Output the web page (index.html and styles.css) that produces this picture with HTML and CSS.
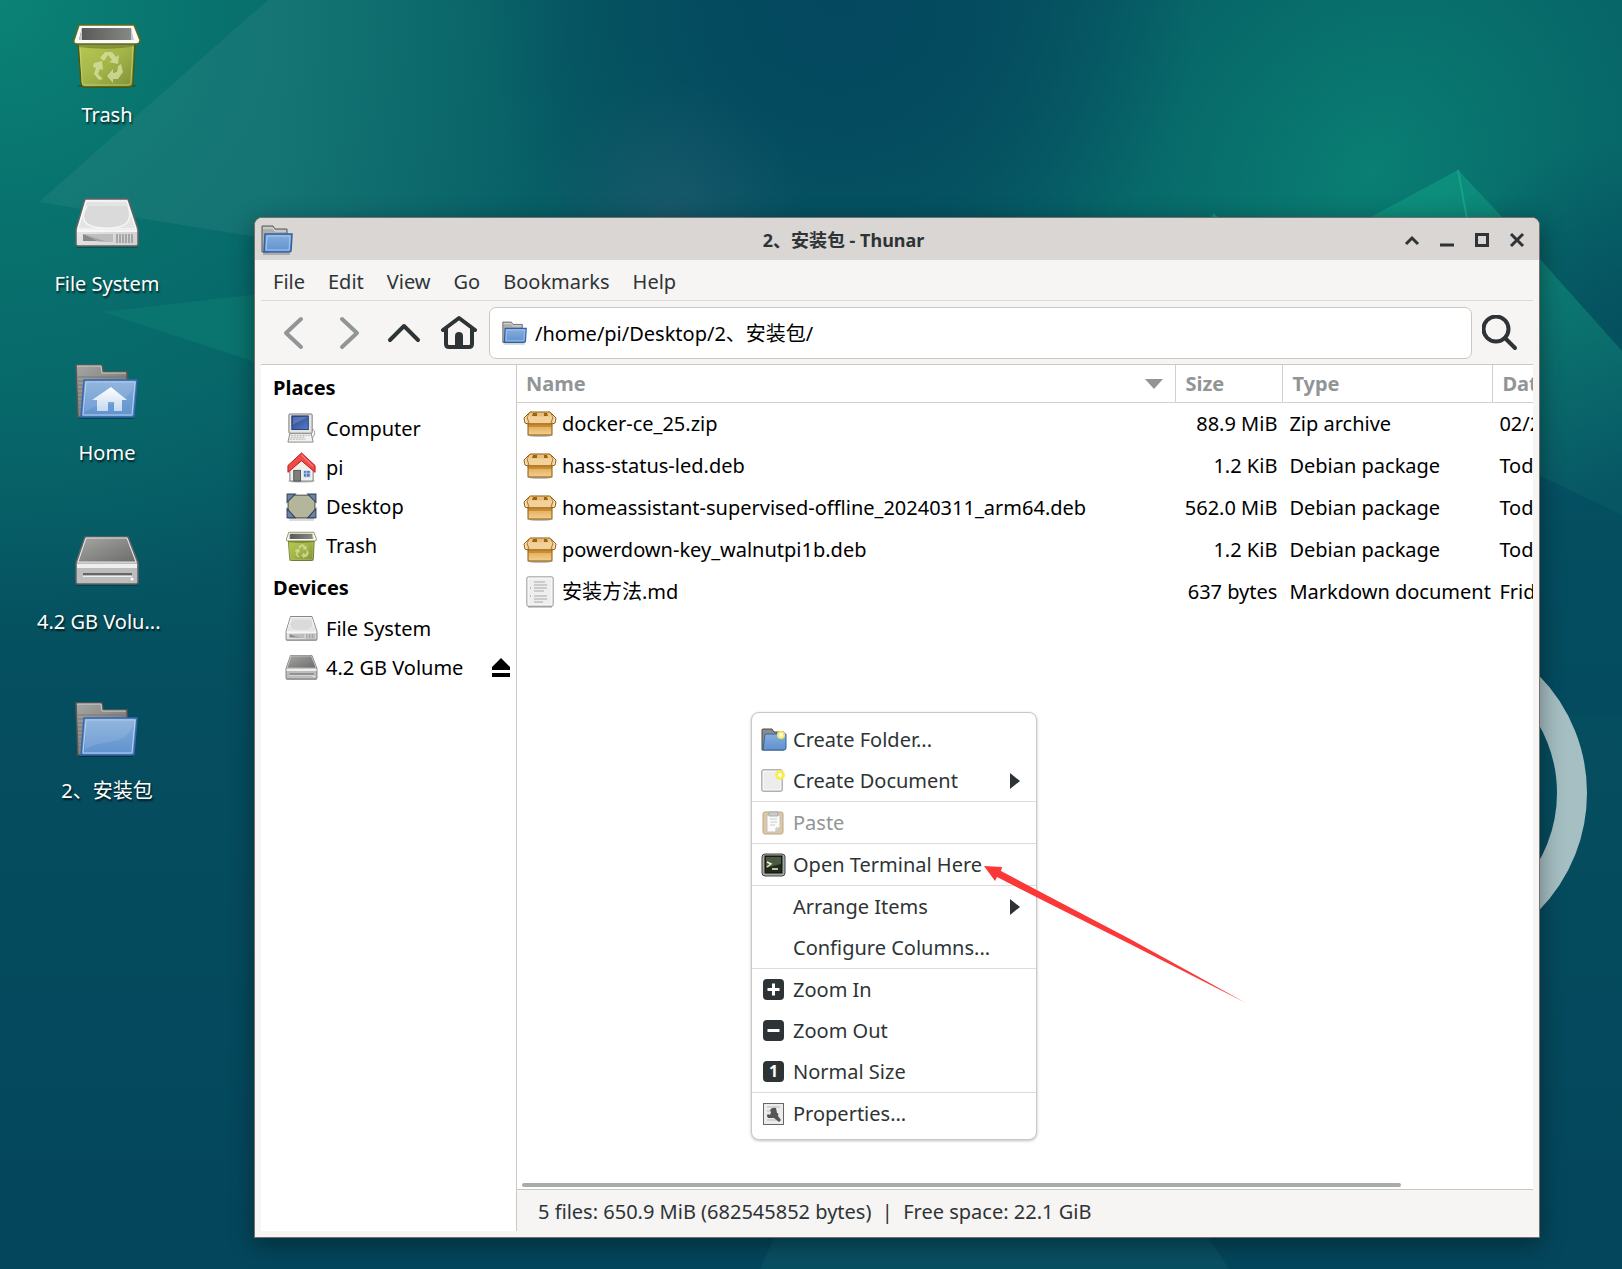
FILE: index.html
```html
<!DOCTYPE html>
<html lang="en">
<head>
    <meta charset="UTF-8">
    <meta name="viewport" content="width=device-width, initial-scale=1.0">
    <title>2、安装包 - Thunar</title>
    <link rel="stylesheet" href="styles.css">
</head>
<body>
    <!-- Shared icons -->
    <svg class="sprite" aria-hidden="true">
        <defs>
            <linearGradient id="gBlue" x1="0" y1="0" x2="0" y2="1"><stop offset="0" stop-color="#86aeda"/><stop offset="1" stop-color="#5f92cf"/></linearGradient>
            <linearGradient id="gGray" x1="0" y1="0" x2="1" y2="1"><stop offset="0" stop-color="#a5a5a3"/><stop offset="1" stop-color="#6c6c6a"/></linearGradient>
            <linearGradient id="gGreen" x1="0" y1="0" x2="1" y2="1"><stop offset="0" stop-color="#b9c955"/><stop offset="0.5" stop-color="#a3b548"/><stop offset="1" stop-color="#7f9038"/></linearGradient>
            <linearGradient id="gPit" x1="0" y1="0" x2="1" y2="0"><stop offset="0" stop-color="#565854"/><stop offset="1" stop-color="#888a86"/></linearGradient>
            <linearGradient id="gLight" x1="0" y1="0" x2="1" y2="1"><stop offset="0" stop-color="#f2f2f2"/><stop offset="1" stop-color="#cfcfcf"/></linearGradient>
            <linearGradient id="gHouse" x1="0" y1="0" x2="0" y2="1"><stop offset="0" stop-color="#ffffff"/><stop offset="1" stop-color="#c7d9ef"/></linearGradient>
            <linearGradient id="gBox" x1="0" y1="0" x2="0" y2="1"><stop offset="0" stop-color="#d9973c"/><stop offset="1" stop-color="#f4cf8f"/></linearGradient>
            <linearGradient id="gScreen" x1="0" y1="0" x2="1" y2="1"><stop offset="0" stop-color="#23408f"/><stop offset="1" stop-color="#5b7fc4"/></linearGradient>
        </defs>
        <symbol id="trash" viewBox="0 0 68 68">
            <ellipse cx="34" cy="66" rx="30" ry="2" fill="#000" opacity="0.25"/>
            <path d="M5 22h57l-2 41q0 4-4 4H12q-4 0-4-4z" fill="url(#gGreen)" stroke="#4e5a0c" stroke-width="1.5"/>
            <path d="M7 26h53l-2 36q0 3-3 3H12q-3 0-3-3z" fill="none" stroke="#cbd77d" stroke-width="1" opacity="0.7"/>
            <path d="M5 24h57v2q-24 5-57 1z" fill="#5f6b20" opacity="0.55"/>
            <path d="M6 5h55l6 15q0 4-4 4H4q-4 0-3-4z" fill="#fafafa" stroke="#5f6b18" stroke-width="1.5"/>
            <path d="M9 8h49l2 12H6z" fill="url(#gPit)"/>
            <path d="M9 8v12H6zM58 8v12h3z" fill="#c8c8c4"/>
            <g fill="#dbe2a6" opacity="0.75">
                <path d="M27 38l5-6h7l4 5 3-2-1 9-9-2 3-2-4-5-4 6z"/>
                <path d="M21 43l8-2 1 9-3-1-2 5 5 5-4 1-5-6 2-6-3-1z"/>
                <path d="M48 44l2 8-5 7h-5v4l-6-7 6-7v4l4-1 1-6z"/>
            </g>
        </symbol>
        <symbol id="drive" viewBox="0 0 66 50">
            <rect x="2" y="46" width="62" height="4" rx="2" fill="#000" opacity="0.25"/>
            <path d="M11 1h43l10 30v15q0 2-2 2H4q-2 0-2-2V31z" fill="url(#gLight)" stroke="#636363" stroke-width="1.5"/>
            <path d="M12 3h41l9 28H4z" fill="#e4e4e4" stroke="#fff" stroke-width="1"/>
            <path d="M13 8q-12 20 15 22 35 2 26-22" fill="#dadada" stroke="#f6f6f6" stroke-width="1.5"/>
            <path d="M3 33h60" stroke="#fff" stroke-width="1.5"/>
            <path d="M9 36l22 7H9z" fill="#888"/><path d="M9 36h30v8H25z" fill="#b0b0b0" opacity="0.7"/>
            <path d="M43 36v9M46 36v9M49 36v9M52 36v9M55 36v9M58 36v9" stroke="#777" stroke-width="1"/>
        </symbol>
        <symbol id="volume" viewBox="0 0 66 50">
            <rect x="2" y="46" width="62" height="4" rx="2" fill="#000" opacity="0.25"/>
            <path d="M11 1h43l10 26v19q0 2-2 2H4q-2 0-2-2V27z" fill="#bdbdbd" stroke="#636363" stroke-width="1.5"/>
            <path d="M12 2h41l9 24H4z" fill="url(#gGray)" stroke="#e6e6e6" stroke-width="1"/>
            <path d="M3 28h60v4H3z" fill="#efefef"/>
            <path d="M9 37h49v2H9z" fill="#666"/><path d="M9 40h49v1H9z" fill="#eee"/>
            <circle cx="58" cy="43" r="1.5" fill="#fff"/>
        </symbol>
        <symbol id="folder" viewBox="0 0 64 56">
            <path d="M4 53h54v2H4z" fill="#000" opacity="0.3"/>
            <path d="M1 1h26l1 7h24v30l-46 15H3z" fill="url(#gGray)" stroke="#585856" stroke-width="1.5"/>
            <path d="M2 2h24l1 7h24" fill="none" stroke="#cfcfcd"/>
            <path d="M3 13h48M3 17h48M3 21h8M3 25h7M3 29h7M3 33h7M3 37h6M3 41h6M3 45h5" stroke="#777" stroke-width="1"/>
            <path d="M9 16h53l-3 36q0 1-2 1H6z" fill="url(#gBlue)" stroke="#3566ac" stroke-width="1.5"/>
            <path d="M11 18h49l-3 33H8z" fill="none" stroke="#b9d2ee"/>
            <path d="M11 19h48l-1 5q-6 14-24 16-14 1-24 8z" fill="#fff" opacity="0.1"/>
        </symbol>
        <symbol id="folder-home" viewBox="0 0 64 56">
            <use href="#folder" width="64" height="56"/>
            <path d="M36 23l16 13h-5v11h-8v-9h-6v9h-11V36h-5z" fill="url(#gHouse)"/>
        </symbol>
        <symbol id="folder-small" viewBox="0 0 32 30">
            <path d="M2 28h27v2H2z" fill="#000" opacity="0.2"/>
            <path d="M1 1h11l2 3h12v6L8 27H1z" fill="#aeaeac" stroke="#5d5d5b"/>
            <path d="M2 3h10l2 3h11" fill="none" stroke="#e2e2e0"/>
            <path d="M4 9h27l-1 17q0 1-2 1H3z" fill="url(#gBlue)" stroke="#2f5fa4" stroke-width="1.5"/>
            <path d="M6 11h23l-1 14H5z" fill="none" stroke="#a9c8ec"/>
        </symbol>
        <symbol id="computer" viewBox="0 0 32 32">
            <path d="M26 17q5 0 3 6l-2 3" fill="none" stroke="#999"/>
            <rect x="3" y="1" width="24" height="20" rx="1" fill="#e5e5e1" stroke="#777"/>
            <rect x="6" y="3" width="17" height="14" fill="url(#gScreen)" stroke="#253d78"/>
            <path d="M7 4h15l-15 8z" fill="#fff" opacity="0.2"/>
            <path d="M4 21h22l2 9H2z" fill="#f2f2ef" stroke="#888"/>
            <path d="M5 23h20M5 25h14M4 27h16" stroke="#aaa" stroke-dasharray="2 1"/>
        </symbol>
        <symbol id="house" viewBox="0 0 32 32">
            <ellipse cx="16" cy="30" rx="14" ry="2" fill="#000" opacity="0.15"/>
            <path d="M4 14L16 4l12 12v14H4z" fill="#f0f0ed" stroke="#777"/>
            <rect x="8" y="19" width="7" height="11" fill="#7d7f78" stroke="#555"/>
            <rect x="18" y="19" width="7" height="7" fill="#5579b8" stroke="#dfe6f0"/>
            <path d="M21 19v7M18 22h7" stroke="#b8c9e4"/>
            <path d="M16 1l14 13v7L16 9 2 21v-7z" fill="#ef4b4b" stroke="#c01414"/>
            <path d="M16 3l12 12" stroke="#ff9d9d"/>
        </symbol>
        <symbol id="desktop" viewBox="0 0 32 28">
            <rect x="4" y="25" width="24" height="3" fill="#000" opacity="0.15"/>
            <rect x="3" y="3" width="26" height="22" fill="#b4b69c" stroke="#4f5146"/>
            <path d="M2 2h8l-8 8zM30 2h-8l8 8zM2 25h8l-8-9zM30 25h-8l8-9z" fill="#6c82a6" stroke="#35445f"/>
        </symbol>
        <symbol id="package" viewBox="0 0 34 26">
            <ellipse cx="17" cy="24" rx="13" ry="2" fill="#000" opacity="0.25"/>
            <rect x="5" y="9" width="24" height="15" rx="1" fill="url(#gBox)" stroke="#8f5902"/>
            <path d="M7 1h20l3 6H4z" fill="#f0c98b"/>
            <path d="M10 2h14l1 3H9z" fill="#9b6410"/><path d="M14 2h7v3h-7z" fill="#e6bf80"/>
            <path d="M7 1h20l6 6-1 5-3 1H5l-3-1-1-5z" fill="none" stroke="#8f5902"/>
            <path d="M4 6h26l2 1-1 4-3 1H6l-3-1-1-4z" fill="#f3d19b"/>
            <path d="M7 1L4 6l2 6M27 1l3 5-2 6" fill="none" stroke="#b07a2a"/>
            <path d="M5 14h24v2H5z" fill="#b5761c" opacity="0.6"/>
        </symbol>
        <symbol id="document" viewBox="0 0 28 32">
            <rect x="2" y="29" width="24" height="3" fill="#000" opacity="0.2"/>
            <rect x="1" y="1" width="26" height="29" rx="1" fill="#eee" stroke="#777"/>
            <rect x="2" y="2" width="24" height="27" fill="none" stroke="#fff"/>
            <path d="M8 6h11M8 9h13M8 12h13M8 15h10M8 20h13M8 23h13M8 26h9" stroke="#a9a9a9"/>
            <path d="M4 12h1M4 20h1" stroke="#888"/>
        </symbol>
        <symbol id="star" viewBox="0 0 12 12">
            <circle cx="6" cy="6" r="5" fill="#f6ee45" opacity="0.9"/><circle cx="6" cy="6" r="2" fill="#fffce0"/>
        </symbol>
        <symbol id="new-folder" viewBox="0 0 26 24">
            <path d="M1 22V2q0-1 1-1h9l2 3h10v18z" fill="#8b8b89" stroke="#4a4a48"/>
            <path d="M4 6h21v14q0 2-2 2H2z" fill="url(#gBlue)" stroke="#3465a4"/>
            <circle cx="20" cy="7" r="4" fill="#f3ea6a"/><circle cx="20" cy="7" r="2" fill="#fffde0"/>
        </symbol>
        <symbol id="new-document" viewBox="0 0 26 24">
            <rect x="1" y="1" width="20" height="21" rx="1" fill="#ececec" stroke="#666"/>
            <rect x="2" y="2" width="18" height="19" fill="none" stroke="#fff"/>
            <use href="#star" x="13" y="0" width="12" height="12"/>
        </symbol>
        <symbol id="paste" viewBox="0 0 26 24">
            <g opacity="0.6">
                <rect x="2" y="1" width="20" height="22" rx="2" fill="#c7a46c" stroke="#94702f"/>
                <path d="M6 4h13v13l-4 4H6z" fill="#fafafa" stroke="#999"/>
                <path d="M8 1h9v4H8z" fill="#aaa" stroke="#777"/>
                <path d="M9 8h7M9 11h7M9 14h5" stroke="#aaa"/>
                <path d="M19 17h-4v4z" fill="#ccc" stroke="#999"/>
            </g>
        </symbol>
        <symbol id="terminal" viewBox="0 0 26 24">
            <rect x="1" y="1" width="23" height="22" rx="3" fill="#a8a9a3" stroke="#444"/>
            <rect x="4" y="3" width="17" height="17" fill="#1f2a17" stroke="#111"/>
            <path d="M5 4h15v7l-15 4z" fill="#6d8060" opacity="0.55"/>
            <path d="M6 9l4 2-4 3M11 16h6" fill="none" stroke="#e8f2e0" stroke-width="1.5"/>
        </symbol>
        <symbol id="zoom-in" viewBox="0 0 26 24">
            <rect x="2" y="1" width="21" height="21" rx="4" fill="#2e3436"/><path d="M6.500 11.500h12M12.500 5.500v12" stroke="#fff" stroke-width="3"/>
        </symbol>
        <symbol id="zoom-out" viewBox="0 0 26 24">
            <rect x="2" y="1" width="21" height="21" rx="4" fill="#2e3436"/><path d="M6.500 11.500h12" stroke="#fff" stroke-width="3"/>
        </symbol>
        <symbol id="properties" viewBox="0 0 26 24">
            <rect x="2.500" y="1.500" width="20" height="21" fill="#ececec" stroke="#666"/>
            <path d="M6 5h13M6 18h13M6 9h4" stroke="#bbb"/>
            <path d="M9 8q2-3 6-2l1 5q2 0 1 3l3 4-2 2-5-4H7q-2-3 0-4l2 1 1-3z" fill="#555"/>
        </symbol>
    </svg>

    <main class="desktop">
        <svg class="wallpaper" viewBox="0 0 1622 1269" preserveAspectRatio="none" aria-hidden="true">
            <defs>
                <linearGradient id="wBase" x1="0" y1="0" x2="0" y2="1"><stop offset="0" stop-color="#065a62"/><stop offset="0.3" stop-color="#065d65"/><stop offset="0.55" stop-color="#054e5f"/><stop offset="1" stop-color="#04465c"/></linearGradient>
                <radialGradient id="wLeft" gradientUnits="userSpaceOnUse" cx="0" cy="0" r="620"><stop offset="0" stop-color="#0b8275"/><stop offset="0.35" stop-color="#08726e"/><stop offset="1" stop-color="#08726e" stop-opacity="0"/></radialGradient>
                <radialGradient id="wRight" gradientUnits="userSpaceOnUse" cx="1370" cy="170" r="480" gradientTransform="rotate(-50 1370 170) translate(0 34) scale(1 0.8)"><stop offset="0" stop-color="#0a7f73"/><stop offset="0.5" stop-color="#08706d" stop-opacity="0.75"/><stop offset="1" stop-color="#08706d" stop-opacity="0"/></radialGradient>
                <radialGradient id="wDark" gradientUnits="userSpaceOnUse" cx="840" cy="0" r="360"><stop offset="0" stop-color="#04485f"/><stop offset="0.4" stop-color="#04485f" stop-opacity="0.8"/><stop offset="1" stop-color="#04485f" stop-opacity="0"/></radialGradient>
                <radialGradient id="wHaze" gradientUnits="userSpaceOnUse" cx="670" cy="210" r="130"><stop offset="0" stop-color="#235b70" stop-opacity="0.6"/><stop offset="1" stop-color="#235b70" stop-opacity="0"/></radialGradient>
                <radialGradient id="wEdge" gradientUnits="userSpaceOnUse" cx="1622" cy="330" r="190"><stop offset="0" stop-color="#05505f"/><stop offset="1" stop-color="#05505f" stop-opacity="0"/></radialGradient>
                <linearGradient id="wRay" x1="0" y1="0" x2="1" y2="0"><stop offset="0" stop-color="#3a8a86" stop-opacity="0.25"/><stop offset="0.4" stop-color="#348688" stop-opacity="0.3"/><stop offset="0.9" stop-color="#2a8080" stop-opacity="0"/></linearGradient>
                <linearGradient id="wSlope" gradientUnits="userSpaceOnUse" x1="1458" y1="170" x2="1600" y2="500"><stop offset="0" stop-color="#0d8f7c"/><stop offset="0.5" stop-color="#0b736f"/><stop offset="1" stop-color="#075664"/></linearGradient>
            </defs>
            <rect width="1622" height="1269" fill="url(#wBase)"/>
            <rect width="1622" height="1269" fill="url(#wLeft)"/>
            <rect width="1622" height="1269" fill="url(#wRight)"/>
            <rect width="1622" height="1269" fill="url(#wDark)"/>
            <rect width="1622" height="1269" fill="url(#wHaze)"/>
            <rect width="1622" height="1269" fill="url(#wEdge)"/>
            <path d="M39 202L268 0h320l35 260H400z" fill="url(#wRay)"/>
            <path d="M102 312l190-22v84z" fill="#0a746e"/>
            <path d="M1458 170l-100 54 180 276 84 12V351L1505 220z" fill="url(#wSlope)"/>
            <path d="M1458 170l10 54" stroke="#18a189" stroke-width="2"/>
            <path d="M1213 213l12 10h-14z" fill="#11947f"/>
            <path d="M1538 475l84 40v200h-84z" fill="#04495f" opacity="0.6"/>
            <path d="M774 1238h435l20 31H760z" fill="#15606e" opacity="0.35"/>
            <circle cx="1419" cy="793" r="153" fill="none" stroke="#a6bfc3" stroke-width="30"/>
        </svg>

        <nav class="launchers" aria-label="Desktop">
            <a href="#" class="launcher"><span class="launcher-icon"><svg class="icon-trash"><use href="#trash"/></svg></span><span class="launcher-label">Trash</span></a>
            <a href="#" class="launcher"><span class="launcher-icon"><svg class="icon-drive"><use href="#drive"/></svg></span><span class="launcher-label">File System</span></a>
            <a href="#" class="launcher"><span class="launcher-icon"><svg class="icon-folder"><use href="#folder-home"/></svg></span><span class="launcher-label">Home</span></a>
            <a href="#" class="launcher"><span class="launcher-icon"><svg class="icon-drive"><use href="#volume"/></svg></span><span class="launcher-label truncated">4.2 GB Volu...</span></a>
            <a href="#" class="launcher"><span class="launcher-icon"><svg class="icon-folder"><use href="#folder"/></svg></span><span class="launcher-label">2、安装包</span></a>
        </nav>

        <section class="window">
            <header class="titlebar">
                <svg class="icon-app" aria-hidden="true"><use href="#folder-small"/></svg>
                <h1 class="title">2、安装包 - Thunar</h1>
                <button class="title-button" aria-label="Shade"><svg viewBox="0 0 16 16"><path d="M2 12l6-6 6 6" fill="none" stroke="#2e3436" stroke-width="3"/></svg></button>
                <button class="title-button" aria-label="Minimize"><svg viewBox="0 0 16 16"><path d="M1 13h14" stroke="#2e3436" stroke-width="3"/></svg></button>
                <button class="title-button" aria-label="Maximize"><svg viewBox="0 0 16 16"><rect x="2.500" y="2.500" width="11" height="11" fill="none" stroke="#2e3436" stroke-width="3"/></svg></button>
                <button class="title-button" aria-label="Close"><svg viewBox="0 0 16 16"><path d="M2 2l12 12M14 2L2 14" stroke="#2e3436" stroke-width="3"/></svg></button>
            </header>

            <nav class="menubar">
                <button>File</button>
                <button>Edit</button>
                <button>View</button>
                <button>Go</button>
                <button>Bookmarks</button>
                <button>Help</button>
            </nav>

            <div class="toolbar">
                <button class="tool" aria-label="Back" disabled><svg viewBox="0 0 36 36"><path d="M25 4L10 18l15 14" fill="none" stroke="#929595" stroke-width="4" stroke-linecap="round" stroke-linejoin="round"/></svg></button>
                <button class="tool" aria-label="Forward" disabled><svg viewBox="0 0 36 36"><path d="M11 4l15 14-15 14" fill="none" stroke="#929595" stroke-width="4" stroke-linecap="round" stroke-linejoin="round"/></svg></button>
                <button class="tool" aria-label="Up"><svg viewBox="0 0 36 36"><path d="M4 25l14-14 14 14" fill="none" stroke="#2e3436" stroke-width="4" stroke-linecap="round" stroke-linejoin="round"/></svg></button>
                <button class="tool" aria-label="Home"><svg viewBox="0 0 36 36"><path d="M2 15L18 3l16 12M5 14v15q0 3 3 3h20q3 0 3-3V14" fill="none" stroke="#2e3436" stroke-width="4" stroke-linecap="round" stroke-linejoin="round"/><path d="M14 32V21q0-4 4-4t4 4v11" fill="#2e3436"/></svg></button>
                <label class="path">
                    <svg class="icon-path" aria-hidden="true"><use href="#folder-small"/></svg>
                    <input type="text" value="/home/pi/Desktop/2、安装包/" aria-label="Location">
                </label>
                <button class="tool" aria-label="Search"><svg viewBox="0 0 36 36"><circle cx="14" cy="14" r="12.500" fill="none" stroke="#2e3436" stroke-width="4"/><path d="M23 23l10 10" stroke="#2e3436" stroke-width="4" stroke-linecap="round"/></svg></button>
            </div>

            <div class="content">
                <aside class="sidebar">
                    <h2>Places</h2>
                    <a href="#"><svg><use href="#computer"/></svg>Computer</a>
                    <a href="#"><svg><use href="#house"/></svg>pi</a>
                    <a href="#"><svg><use href="#desktop"/></svg>Desktop</a>
                    <a href="#"><svg><use href="#trash"/></svg>Trash</a>
                    <h2>Devices</h2>
                    <a href="#"><svg><use href="#drive"/></svg>File System</a>
                    <div class="device">
                        <a href="#"><svg><use href="#volume"/></svg>4.2 GB Volume</a>
                        <button class="eject" aria-label="Eject"><svg viewBox="0 0 20 20"><path d="M10 0l9 9v3H1V9zM1 15h18v4H1z"/></svg></button>
                    </div>
                </aside>

                <div class="pane">
                    <div class="files">
                        <table>
                            <thead>
                                <tr>
                                    <th class="col-name"><span class="sort">Name<svg viewBox="0 0 18 10"><path d="M0 0h18L9 10z" fill="#929595"/></svg></span></th>
                                    <th class="col-size">Size</th>
                                    <th class="col-type">Type</th>
                                    <th class="col-date">Date Modified</th>
                                </tr>
                            </thead>
                            <tbody>
                                <tr>
                                    <td><span class="file"><svg><use href="#package"/></svg>docker-ce_25.zip</span></td>
                                    <td class="size">88.9 MiB</td>
                                    <td>Zip archive</td>
                                    <td>02/26/2024</td>
                                </tr>
                                <tr>
                                    <td><span class="file"><svg><use href="#package"/></svg>hass-status-led.deb</span></td>
                                    <td class="size">1.2 KiB</td>
                                    <td>Debian package</td>
                                    <td>Today</td>
                                </tr>
                                <tr>
                                    <td><span class="file"><svg><use href="#package"/></svg>homeassistant-supervised-offline_20240311_arm64.deb</span></td>
                                    <td class="size">562.0 MiB</td>
                                    <td>Debian package</td>
                                    <td>Today</td>
                                </tr>
                                <tr>
                                    <td><span class="file"><svg><use href="#package"/></svg>powerdown-key_walnutpi1b.deb</span></td>
                                    <td class="size">1.2 KiB</td>
                                    <td>Debian package</td>
                                    <td>Today</td>
                                </tr>
                                <tr>
                                    <td><span class="file"><svg><use href="#document"/></svg>安装方法.md</span></td>
                                    <td class="size">637 bytes</td>
                                    <td>Markdown document</td>
                                    <td>Friday</td>
                                </tr>
                            </tbody>
                        </table>
                        <div class="scrollbar"></div>
                    </div>
                    <footer class="statusbar">5 files: 650.9 MiB (682545852 bytes)&nbsp; |&nbsp; Free space: 22.1 GiB</footer>
                </div>
            </div>
        </section>

        <div class="context-menu">
            <button><svg><use href="#new-folder"/></svg>Create Folder...</button>
            <button><svg><use href="#new-document"/></svg>Create Document<span class="more"></span></button>
            <hr>
            <button disabled><svg><use href="#paste"/></svg>Paste</button>
            <hr>
            <button><svg><use href="#terminal"/></svg>Open Terminal Here</button>
            <hr>
            <button><svg></svg>Arrange Items<span class="more"></span></button>
            <button><svg></svg>Configure Columns...</button>
            <hr>
            <button><svg><use href="#zoom-in"/></svg>Zoom In</button>
            <button><svg><use href="#zoom-out"/></svg>Zoom Out</button>
            <button><span class="one">1</span>Normal Size</button>
            <hr>
            <button><svg><use href="#properties"/></svg>Properties...</button>
        </div>

        <svg class="arrow" viewBox="0 0 264 138" aria-hidden="true"><path d="M0 0l18 1-1 4 49 26 80 42 116 64-116-59-80-40-53-27-2 4z" fill="#fb3838"/></svg>
    </main>
</body>
</html>
```
FILE: styles.css
```css
body {
    margin: 0;
    font-family: "Noto Sans", "Noto Sans CJK SC", sans-serif;
    font-size: 20px;
    line-height: 28px;
    color: #000;
}
button {
    padding: 0;
    border: none;
    background: none;
    font: inherit;
    color: #2e3436;
}
a {
    color: inherit;
    text-decoration: none;
}
.sprite {
    position: absolute;
    width: 0;
    height: 0;
}

/* Desktop */
.desktop {
    position: relative;
    height: 100vh;
    overflow: hidden;
    background-color: #044a5e;
}
.wallpaper {
    position: absolute;
    width: 100%;
    height: 100%;
}
.launchers {
    position: absolute;
    top: 20px;
    left: 32px;
    width: 150px;
    display: flex;
    flex-direction: column;
    gap: 60px;
}
.launcher {
    display: flex;
    flex-direction: column;
    align-items: center;
    gap: 13px;
    color: #fff;
    text-shadow: 1px 2px 2px rgba(0, 0, 0, 0.7);
}
.launcher-icon {
    display: flex;
    justify-content: center;
    align-items: center;
    height: 68px;
}
.launcher-label.truncated {
    width: 140px;
}
.icon-trash { width: 68px; height: 68px; }
.icon-drive { width: 66px; height: 50px; }
.icon-folder { width: 64px; height: 56px; }

/* Window */
.window {
    position: absolute;
    top: 217px;
    right: 82px;
    bottom: 31px;
    left: 254px;
    box-sizing: border-box;
    display: flex;
    flex-direction: column;
    border: 1px solid #75706c;
    border-radius: 8px 8px 0 0;
    background-color: #f6f5f4;
    box-shadow: 0 6px 24px rgba(0, 0, 0, 0.4);
    overflow: hidden;
}
.titlebar {
    display: flex;
    align-items: center;
    height: 42px;
    padding: 1px 5px 0 6px;
    box-sizing: border-box;
    background-color: #dad6d3;
}
.icon-app { width: 32px; height: 30px; }
.title {
    flex: 1;
    margin: 0;
    font-size: 18px;
    text-align: center;
    color: #2e3436;
}
.title-button {
    display: flex;
    justify-content: center;
    width: 35px;
}
.title-button svg { width: 16px; height: 16px; }
.menubar {
    box-sizing: border-box;
    display: flex;
    gap: 1px;
    height: 41px;
    margin: 0 6px;
    padding-top: 3px;
    border-bottom: 1px solid #dcd8d5;
}
.menubar button { padding: 0 11px 0 12px; }
.menubar button + button { padding-left: 11px; }
.toolbar {
    display: flex;
    align-items: center;
    height: 63px;
    margin: 0 6px;
    padding: 0 6px 0 5px;
    border-bottom: 1px solid #cdc7c2;
}
.tool {
    display: flex;
    justify-content: center;
    width: 55px;
}
.tool svg { width: 36px; height: 36px; }
.path {
    flex: 1;
    display: flex;
    align-items: center;
    gap: 8px;
    height: 50px;
    margin-left: 3px;
    padding: 0 12px;
    border: 1px solid #cdc7c2;
    border-radius: 7px;
    background-color: #fff;
}
.icon-path { width: 25px; height: 24px; }
.path input {
    flex: 1;
    padding: 2px 0 0;
    border: none;
    outline: none;
    background: none;
    font: inherit;
    color: #000;
}
.content {
    flex: 1;
    display: flex;
    min-height: 0;
    margin: 0 6px 6px;
    background-color: #fff;
}

/* Sidebar */
.sidebar {
    box-sizing: border-box;
    width: 256px;
    border-right: 1px solid #cdc7c2;
}
.sidebar h2 {
    margin: 0;
    padding: 2px 0 0 12px;
    font-size: 20px;
    line-height: 42px;
}
.sidebar a {
    display: flex;
    align-items: center;
    gap: 8px;
    height: 39px;
    padding-left: 24px;
}
.sidebar a svg { width: 33px; height: 31px; }
.device {
    display: flex;
    justify-content: space-between;
    align-items: center;
    padding-right: 5px;
}
.eject svg {
    display: block;
    width: 20px;
    height: 20px;
}

/* File list */
.pane {
    flex: 1;
    display: flex;
    flex-direction: column;
    min-width: 0;
}
.files {
    flex: 1;
    display: flex;
    flex-direction: column;
    justify-content: space-between;
    overflow: hidden;
}
table {
    width: 115%;
    table-layout: fixed;
    border-collapse: separate;
    border-spacing: 0;
}
th {
    box-sizing: border-box;
    height: 38px;
    padding: 0 9px;
    border-right: 1px solid #d5d0cc;
    border-bottom: 1px solid #d5d0cc;
    text-align: left;
    color: #929595;
}
.col-size { width: 107px; }
.col-type { width: 210px; }
.col-date { width: 192px; }
.sort {
    display: flex;
    justify-content: space-between;
    align-items: center;
    padding-right: 3px;
}
.sort svg { width: 18px; height: 10px; }
td {
    height: 42px;
    padding: 0 6px;
    white-space: nowrap;
}
td.size { text-align: right; }
.file {
    display: flex;
    align-items: center;
    gap: 5px;
}
.file svg {
    width: 34px;
    height: 32px;
}
.scrollbar {
    width: 86.5%;
    height: 4px;
    margin: 0 0 2px 5px;
    border-radius: 2px;
    background-color: #a8abab;
}
.statusbar {
    height: 26px;
    padding: 8px 21px 7px;
    border-top: 1px solid #cdc7c2;
    background-color: #f6f5f4;
    color: #2e3436;
}

/* Context menu */
.context-menu {
    position: absolute;
    top: 712px;
    left: 751px;
    box-sizing: border-box;
    width: 286px;
    padding: 6px 0 5px;
    border: 1px solid #cdc7c2;
    border-radius: 8px;
    background-color: #fff;
    box-shadow: 0 1px 3px rgba(0, 0, 0, 0.25);
}
.context-menu button {
    display: flex;
    align-items: center;
    gap: 6px;
    width: 100%;
    height: 41px;
    padding: 0 16px 0 9px;
}
.context-menu button:disabled { color: #929595; }
.context-menu svg { width: 26px; height: 24px; }
.context-menu hr {
    margin: 0;
    border: none;
    border-top: 1px solid #dedbd8;
}
.more {
    margin-left: auto;
    border-top: 8px solid transparent;
    border-bottom: 8px solid transparent;
    border-left: 10px solid #2e3436;
}
.one {
    width: 21px;
    height: 21px;
    margin: 0 3px 0 2px;
    border-radius: 4px;
    background-color: #2e3436;
    font-size: 16px;
    font-weight: bold;
    line-height: 21px;
    text-align: center;
    color: #fff;
}

/* Pointer drawn over the window */
.arrow {
    position: absolute;
    top: 866px;
    left: 984px;
    width: 264px;
    height: 138px;
}
```
